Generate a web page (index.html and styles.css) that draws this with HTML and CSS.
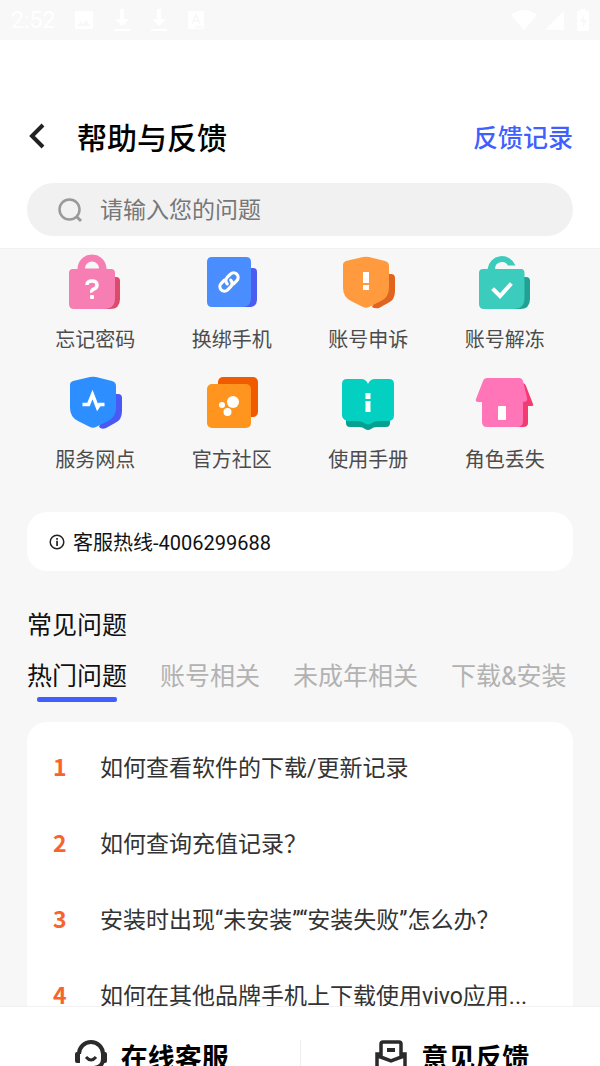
FILE: index.html
```html
<!DOCTYPE html>
<html lang="zh-CN">
<head>
<meta charset="utf-8">
<meta name="viewport" content="width=device-width, initial-scale=1">
<title>帮助与反馈</title>
<link rel="stylesheet" href="styles.css">
</head>
<body>
<div class="status">
  <span class="clock">2:52</span>
  <svg width="20" height="20" viewBox="0 0 20 20"><path fill="#fff" fill-rule="evenodd" d="M2 1h16q1 0 1 1v16q0 1-1 1H2q-1 0-1-1V2q0-1 1-1zm1 15h14l-5-6-3 4-2-3z"/></svg>
  <svg width="18" height="24" viewBox="0 0 18 24"><path fill="#fff" d="M7 1h4v10h5l-7 7-7-7h5zM1 21h16v2H1z"/></svg>
  <svg width="18" height="24" viewBox="0 0 18 24"><path fill="#fff" d="M7 1h4v10h5l-7 7-7-7h5zM1 21h16v2H1z"/></svg>
  <svg width="18" height="20" viewBox="0 0 18 20"><rect x="1" y="1" width="16" height="18" rx="1" fill="#fff"/><path d="M5 14l4-9 4 9M6.500 11h5M8 17h7" fill="none" stroke="#f7f7f7" stroke-width="1.500"/></svg>
  <span class="spacer"></span>
  <svg width="26" height="20" viewBox="0 0 26 20"><path fill="#fff" d="M0 5q13-10 26 0L13 20z"/></svg>
  <svg width="20" height="20" viewBox="0 0 20 20"><path fill="#fff" d="M20 1v19H1z"/></svg>
  <svg width="12" height="22" viewBox="0 0 12 22"><path fill="#fff" fill-rule="evenodd" d="M3 0h6v2h3v20H0V2h3zM7 6l-4 7h3v6l4-8H7z"/></svg>
</div>

<header class="header">
  <div class="titlebar">
    <button class="back" type="button" aria-label="返回"><svg width="20" height="28" viewBox="0 0 20 28"><path d="M16 3L5 14l11 11" fill="none" stroke="#222" stroke-width="4"/></svg></button>
    <h1 class="title">帮助与反馈</h1>
    <a class="records" href="#">反馈记录</a>
  </div>
  <label class="search">
    <svg width="26" height="26" viewBox="0 0 26 26"><circle cx="12.500" cy="12.500" r="10" fill="none" stroke="#999" stroke-width="2.500"/><path d="M19 19l5 5" stroke="#999" stroke-width="3"/></svg>
    <input class="search-input" type="text" placeholder="请输入您的问题" aria-label="请输入您的问题">
  </label>
</header>

<main class="content">
  <nav class="services">
    <a class="service" href="#">
      <svg class="icon" viewBox="0 0 60 60"><path d="M44 25h7q4 0 4 4v18q0 10-10 10h-9z" fill="#dc4a6c"/><path fill="#f67eb2" fill-rule="evenodd" d="M12.500 17a14.500 14.500 0 0129 0H46q4 0 4 4v25q0 11-11 11H9q-5 0-5-5V21q0-4 4-4zm7.500-.500h14a7 7 0 00-14 0z"/><path d="M22 33q0-4 5-4t5 4q0 3-3 4t-2 3.500" fill="none" stroke="#fff" stroke-width="3.500"/><rect x="25" y="43" width="4" height="4" rx="1" fill="#fff"/></svg>
      忘记密码
    </a>
    <a class="service" href="#">
      <svg class="icon" viewBox="0 0 60 60"><path d="M44 16h7q4 0 4 4v27q0 8-8 8h-9z" fill="#4b5cf0"/><path d="M10 5h34q5 0 5 5v36q0 9-9 9H10q-5 0-5-5V10q0-5 5-5z" fill="#4a8dff"/><g transform="rotate(-45 27 30)" fill="none" stroke="#fff" stroke-width="3.200" stroke-linecap="round"><path d="M25 25.500h-4.500a4.500 4.500 0 000 9H25a4.500 4.500 0 004.500-4.500M29 34.500h4.500a4.500 4.500 0 000-9H29a4.500 4.500 0 00-4.500 4.500"/></g></svg>
      换绑手机
    </a>
    <a class="service" href="#">
      <svg class="icon" viewBox="0 0 60 60"><path d="M47 22h6q4 0 4 4v13q0 9-7 12l-9 5q-4 1-7-1z" fill="#e0641f"/><path d="M8 9l17-4q3-.700 6 0l16 4q4 1 4 5v22q0 9-8 13l-12 6q-3 1.500-6 0l-12-6q-8-4-8-13V13q0-3 3-4z" fill="#ff9a3f"/><path d="M25 20h6v11h-6zM25 33h6v5h-6z" fill="#fff"/></svg>
      账号申诉
    </a>
    <a class="service" href="#">
      <svg class="icon" viewBox="0 0 60 60"><path d="M44 25h7q4 0 4 4v18q0 10-10 10h-9z" fill="#1fa194"/><path d="M12.500 17a14.500 14.500 0 0128-3.500H33a7 7 0 00-13 3.500H46q3.500 0 3.500 4v25q0 11-11 11H9q-5 0-5-5V21q0-4 4-4z" fill="#3bccbe"/><path d="M19 38l6 6 10-11" fill="none" stroke="#fff" stroke-width="4" stroke-linecap="square"/></svg>
      账号解冻
    </a>
    <a class="service" href="#">
      <svg class="icon" viewBox="0 0 60 60"><path d="M47 22h6q4 0 4 4v13q0 9-7 12l-9 5q-4 2-7-1z" fill="#4a58f5"/><path d="M8 9l17-4q3-.700 6 0l16 4q4 1 4 5v22q0 9-8 13l-12 6q-3 1.500-6 0l-12-6q-8-4-8-13V13q0-3 3-4z" fill="#2d8fff"/><path d="M17.500 32.500h6l4-10 5 13 2-3h5" fill="none" stroke="#fff" stroke-width="3.500"/></svg>
      服务网点
    </a>
    <a class="service" href="#">
      <svg class="icon" viewBox="0 0 60 60"><rect x="16" y="5" width="40" height="40" rx="5" fill="#f05b00"/><rect x="5" y="12" width="44" height="44" rx="5" fill="#ff941e"/><g fill="#fff"><circle cx="31" cy="30" r="6"/><circle cx="20" cy="33" r="3"/><circle cx="25.500" cy="40" r="4"/></g></svg>
      官方社区
    </a>
    <a class="service" href="#">
      <svg class="icon" viewBox="0 0 60 60"><path d="M8 46h44v5q0 4-4 4h-9q-4 0-6 2-3 2-6 0-2-2-6-2h-9q-4 0-4-4z" fill="#05a08f"/><path d="M9 7h14q5 0 7 5 2-5 7-5h14q5 0 5 5v31q0 6-6 6H40q-4 0-7 2.500-3 2-6 0-3-2.500-7-2.500H9q-5-2-5-6V12q0-5 5-5z" fill="#03d0c1"/><path d="M27.500 21h5v6h-5zM27.500 29h5v11h-5z" fill="#fff"/></svg>
      使用手册
    </a>
    <a class="service" href="#">
      <svg class="icon" viewBox="0 0 60 60"><path d="M42 11h5q3 0 4 3l7 18q1 2-2 2h-3v17q0 4-5 4H38z" fill="#f33b72"/><path d="M12 6h32q3 0 4 3l4 17q1 4-4 4v19q0 6-6 6H12q-5 0-5-5V30H3q-3 0-2-3L8 9q1-3 4-3z" fill="#ff75b8"/><rect x="23" y="34" width="8" height="14" rx="1" fill="#fff"/></svg>
      角色丢失
    </a>
  </nav>

  <a class="hotline" href="tel:4006299688">
    <svg width="16" height="16" viewBox="0 0 16 16"><circle cx="8" cy="8" r="6.800" fill="none" stroke="#222" stroke-width="1.500"/><path d="M7.200 4h1.700v1.700H7.200zM7.200 6.800h1.700V12H7.200z" fill="#222"/></svg>
    客服热线-4006299688
  </a>

  <h2 class="heading">常见问题</h2>
  <div class="tabs" role="tablist">
    <button class="tab active" type="button" role="tab" aria-selected="true">热门问题</button>
    <button class="tab" type="button" role="tab">账号相关</button>
    <button class="tab" type="button" role="tab">未成年相关</button>
    <button class="tab" type="button" role="tab">下载&amp;安装</button>
  </div>

  <ol class="questions">
    <li><a class="question" href="#"><b class="rank">1</b>如何查看软件的下载/更新记录</a></li>
    <li><a class="question" href="#"><b class="rank">2</b>如何查询充值记录？</a></li>
    <li><a class="question" href="#"><b class="rank">3</b>安装时出现“未安装”“安装失败”怎么办？</a></li>
    <li><a class="question" href="#"><b class="rank">4</b>如何在其他品牌手机上下载使用vivo应用...</a></li>
  </ol>
</main>

<footer class="footer">
  <button class="action" type="button">
    <svg width="32" height="32" viewBox="0 0 32 32"><path d="M4 14a12 12 0 0124 0v5q0 8-9 9h-4" fill="none" stroke="#2b2b2b" stroke-width="4"/><path d="M0 14q0-2 2-2h3v11H2q-2 0-2-2zM32 14q0-2-2-2h-3v11h3q2 0 2-2z" fill="#2b2b2b"/><path d="M11 17q5 6 10 0" fill="none" stroke="#2b2b2b" stroke-width="3"/></svg>
    在线客服
  </button>
  <button class="action" type="button">
    <svg width="32" height="32" viewBox="0 0 32 32"><path d="M6 16V4q0-2 2-2h16q2 0 2 2v12M5 14H2v14q0 2 2 2h24q2 0 2-2V14h-3M3 16l13 5 13-5" fill="none" stroke="#2b2b2b" stroke-width="3.500"/><path d="M12 8h8v4h-8z" fill="#2b2b2b"/></svg>
    意见反馈
  </button>
</footer>
</body>
</html>
```

FILE: styles.css
```css
* {
  box-sizing: border-box;
}

body {
  margin: 0;
  height: 100vh;
  display: flex;
  flex-direction: column;
  overflow: hidden;
  background: #f7f7f7;
  color: #111;
  font-family: Roboto, "Noto Sans CJK SC", sans-serif;
}

a {
  color: inherit;
  text-decoration: none;
}

button,
input {
  border: 0;
  padding: 0;
  background: none;
  color: inherit;
  font: inherit;
}

svg {
  flex: none;
}

.status {
  flex: none;
  display: flex;
  align-items: center;
  gap: 19px;
  height: 40px;
  padding: 0 11px;
  background: #f8f8f8;
  color: #fff;
}

.clock {
  font-size: 23px;
}

.spacer {
  flex: 1;
}

.status .spacer ~ svg {
  margin-left: -12px;
}

.status svg:last-child {
  margin-left: -6px;
}

.header {
  flex: none;
  padding: 74px 27px 12px;
  background: #fff;
  border-bottom: 1px solid #f0f0f0;
}

.titlebar {
  display: flex;
  align-items: center;
  height: 44px;
  margin-bottom: 25px;
}

.back {
  display: flex;
  width: 50px;
}

.title {
  flex: 1;
  margin: 0;
  color: #000;
  font-size: 30px;
  font-weight: 500;
}

.records {
  color: #415fff;
  font-size: 25px;
  font-weight: 500;
}

.search {
  display: flex;
  align-items: center;
  gap: 17px;
  height: 53px;
  padding: 1px 30px 0;
  border-radius: 27px;
  background: #f1f1f1;
}

.search-input {
  flex: 1;
  min-width: 0;
  font-size: 23px;
  outline: none;
}

.search-input::placeholder {
  color: #777;
}

.content {
  flex: 1;
  min-height: 0;
  overflow: hidden;
  padding: 3px 27px 0;
}

.services {
  display: grid;
  grid-template-columns: repeat(4, 1fr);
  row-gap: 18px;
}

.service {
  display: flex;
  flex-direction: column;
  align-items: center;
  gap: 14px;
  color: #4c4c4c;
  font-size: 20px;
  line-height: 28px;
}

.icon {
  width: 60px;
  height: 60px;
}

.hotline {
  display: flex;
  align-items: center;
  gap: 8px;
  height: 59px;
  margin-top: 38px;
  padding: 0 22px;
  border-radius: 20px;
  background: #fff;
  font-size: 20px;
}

.heading {
  margin: 37px 0 15px;
  font-size: 25px;
  font-weight: 400;
  line-height: 36px;
}

.tabs {
  display: flex;
  gap: 33px;
  margin-bottom: 20px;
}

.tab {
  color: #b2b2b2;
  font-size: 25px;
  line-height: 36px;
  white-space: nowrap;
}

.tab::after {
  content: "";
  display: block;
  width: 80px;
  height: 5px;
  margin: 2px auto 0;
  border-radius: 2px;
}

.active {
  color: #111;
}

.active::after {
  background: #415fff;
}

.questions {
  margin: 0;
  padding: 7px 26px;
  border-radius: 20px;
  background: #fff;
  list-style: none;
}

.question {
  display: flex;
  align-items: center;
  height: 76px;
  padding-bottom: 3px;
  color: #333;
  font-size: 23px;
  white-space: nowrap;
}

.rank {
  width: 47px;
  color: #f7642c;
  font-family: "Noto Sans CJK SC", sans-serif;
  font-weight: 700;
}

.footer {
  flex: none;
  display: flex;
  height: 100px;
  margin-bottom: -40px;
  padding-top: 33px;
  background: #fff;
  border-top: 1px solid #f2f2f2;
}

.action {
  flex: 1;
  display: flex;
  align-items: center;
  justify-content: center;
  gap: 14px;
  height: 32px;
  padding-left: 4px;
  color: #000;
  font-size: 27px;
  font-weight: 700;
}

.action + .action {
  border-left: 1px solid #eee;
}
```
